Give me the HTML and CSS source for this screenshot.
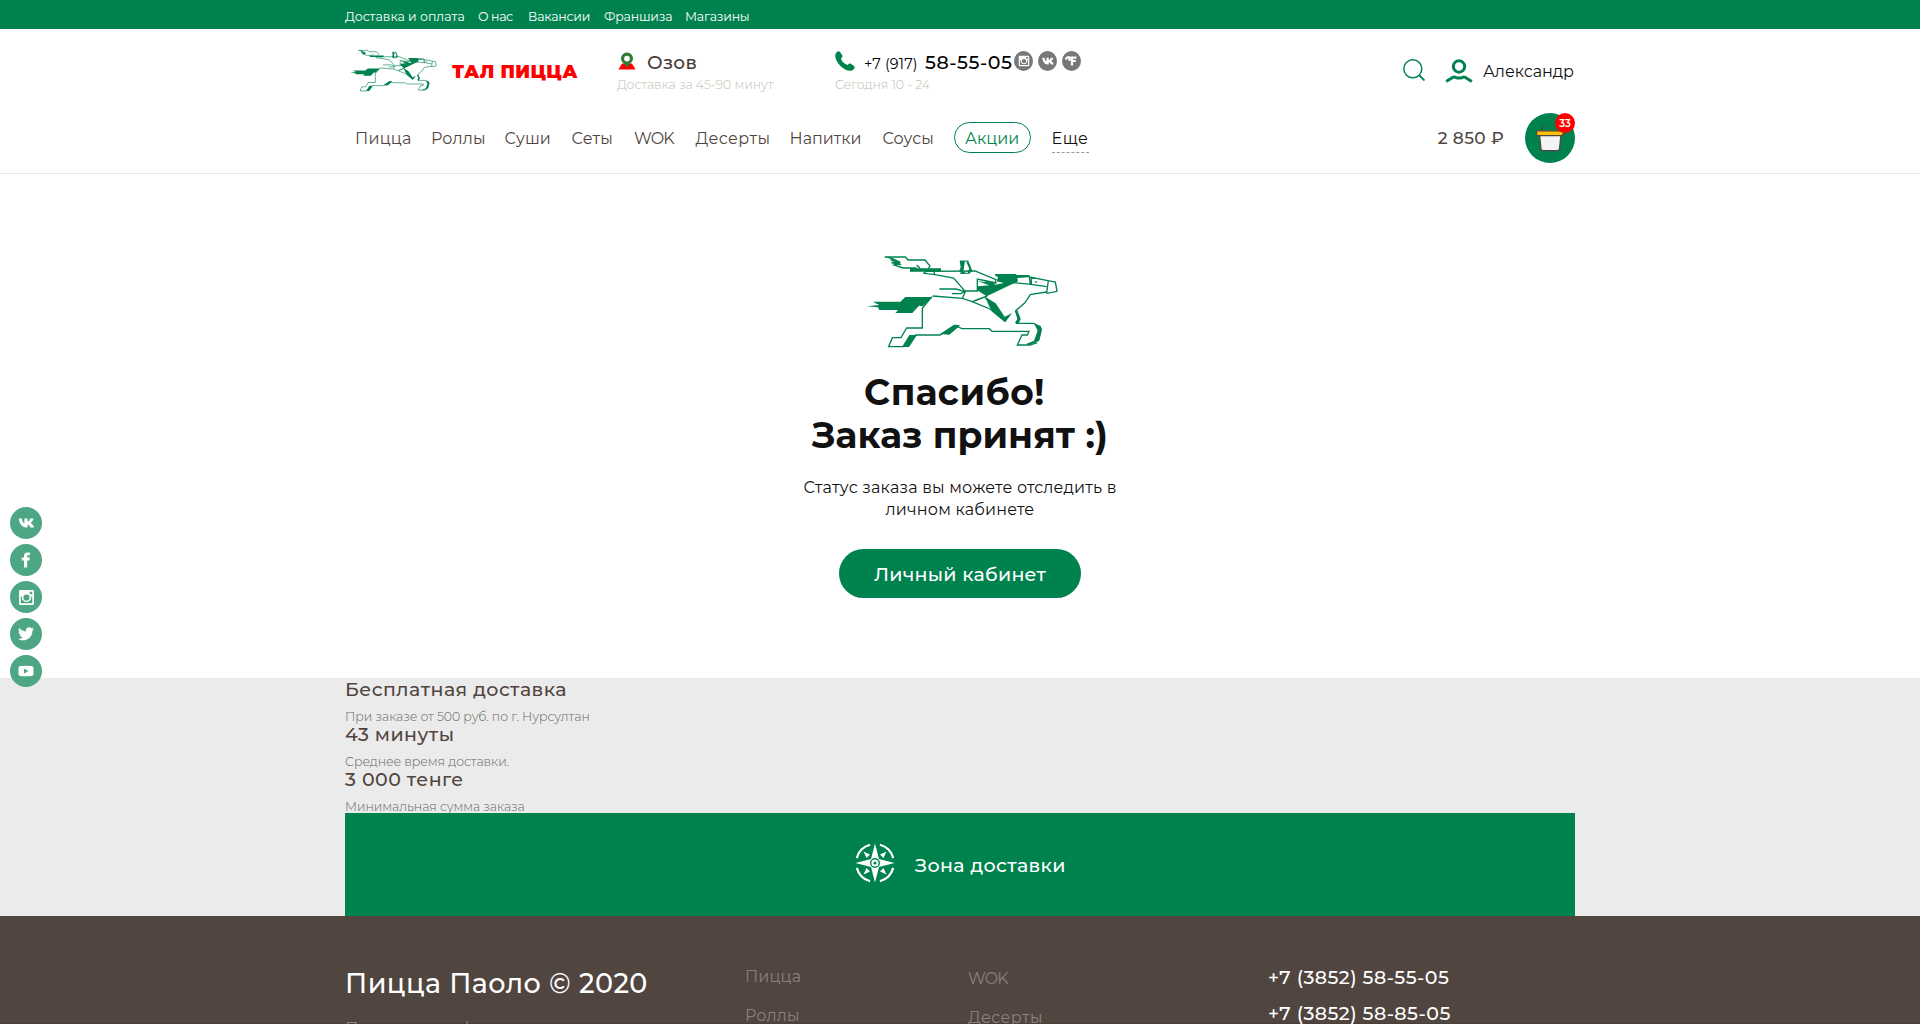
FILE: index.html
```
<!DOCTYPE html>
<html lang="ru">
<head>
<meta charset="utf-8">
<title>Тал Пицца</title>
<link rel="stylesheet" href="styles.css">
</head>
<body>
<svg class="defs" width="0" height="0">
  <symbol id="horse" viewBox="50 40 575 285">
    <g fill="none" stroke="currentColor" stroke-width="4" stroke-linejoin="miter">
      <path d="M104 49H166L174 58H225L240 76L235 84M124 65L150 67L132 73L160 82H200M200 73L210 83M228 92L375 91L438 117L436 127L405 122M228 92L222 98L255 102L311 112L346 153L337 173L366 183L412 166M253 92V102M346 151H382V115L440 127M268 145H318L344 153L332 159H306M412 166L375 181M405 171L430 188L422 200M366 183L420 205L466 243M248 166L337 173M246 168L217 203V262H170L153 291H127L116 318H160L178 295M195 283H270L315 255L336 264H418L426 272H537L532 283H516L502 313H540L562 306M436 105H537V109L605 122L616 124L621 152L592 158L588 154L541 162L524 187L497 210L508 235L500 248H552L574 266M538 109L541 132M480 125L543 131L590 138M595 120L590 157M544 111V132"/>
    </g>
    <g fill="currentColor">
      <path d="M104 48L122 50L154 64L146 67L155 71L150 74L122 68L140 66L119 58L124 56ZM180 83H273V93H180ZM51 197L88 193L68 183H151L166 169H248L218 197L207 195L187 217H136L144 208H88L84 200ZM329 60L345 62L340 92L348 98L336 99L328 91L332 80ZM348 62L356 63L367 90L358 99L352 94L358 84ZM434 100H499V105H535V110L502 112L504 122L492 128L410 167L384 150V137L418 134L384 122L430 126L436 132L462 127L440 122L444 110ZM405 168L437 188L464 228L486 218L466 244L428 213L419 200ZM495 212L502 209L512 234L506 249L495 246L502 235ZM552 248L572 256L576 267L568 300L536 314L530 309L552 300L563 270ZM178 283H201L177 319H156ZM270 280L312 252L330 253L322 262L298 282ZM552 124L562 122L560 127Z"/>
    </g>
    <path d="M331 61H356M330 98H358" fill="none" stroke="currentColor" stroke-width="3"/>
  </symbol>
  <symbol id="vk" viewBox="0 0 16 10"><path fill="currentColor" d="M7.6 9.5C3.5 9.5 1 6 .2.6H3.4C3.7 3.4 4.6 4.9 5.9 5.4V.5H9V3.8C10.300 3.600 11.100 2.300 11.600.6H15C14.600 2.500 13.500 4 12.100 4.900C13.700 5.700 14.900 7.300 15.600 9.500H12C11.400 8 10.400 6.800 9 6.500V9.500Z"/></symbol>
  <symbol id="insta" viewBox="0 0 16 16"><path fill="currentColor" fill-rule="evenodd" d="M2 1H14A1 1 0 0 1 15 2V14A1 1 0 0 1 14 15H2A1 1 0 0 1 1 14V2A1 1 0 0 1 2 1ZM2.600 7V13.400H13.400V7H12.300A4.400 4.400 0 1 1 3.700 7ZM11 2.600V5H13.400V2.600ZM8 5.200A2.900 2.900 0 1 0 8 11A2.900 2.900 0 1 0 8 5.200Z"/></symbol>
</svg>

<div class="topbar">
  <nav class="container topbar__nav">
    <a class="w-delivery">Доставка и оплата</a><a class="w-none">О нас</a><a>Вакансии</a><a>Франшиза</a><a>Магазины</a>
  </nav>
</div>

<header class="header">
  <div class="container header__top">
    <div class="logo">
      <svg class="logo__horse"><use href="#horse"/></svg>
      <span class="logo__name">ТАЛ ПИЦЦА</span>
    </div>
    <div class="info">
      <div class="info__row">
        <svg class="pin" viewBox="0 0 18 18"><path fill="#f00" d="M4 11.500H14L17.500 17.500H.5Z"/><path fill="#2e7d32" fill-rule="evenodd" d="M9 .5A6 6 0 0 1 15 6.500C15 10 11 12 9 15.500C7 12 3 10 3 6.500A6 6 0 0 1 9 .5ZM9 3.700A2.900 2.900 0 1 0 9 9.500A2.900 2.900 0 1 0 9 3.700Z"/></svg>
        <span class="city">Озов</span>
      </div>
      <div class="info__note">Доставка за 45-90 минут</div>
    </div>
    <div class="info">
      <div class="info__row">
        <svg class="phone-icon" viewBox="0 0 20 20"><path fill="#00824f" d="M1.500 1.500C2.700.2 4.100 0 5 1L7.200 4.200C7.900 5.300 7.300 6.300 6 7.300C6.300 10 9.800 13.600 12.700 13.900C13.700 12.700 14.700 12.200 15.800 12.800L19 15C20 15.900 19.700 17.200 18.500 18.500C15.500 21.500 9.500 19 5.200 14.700C.9 10.300-1.300 4.500 1.500 1.500Z"/></svg>
        <span class="tel"><span class="tel__code">+7 (917)</span><span class="tel__num">58-55-05</span></span>
        <span class="soc">
          <i><svg width="12" height="12"><use href="#insta"/></svg></i>
          <i><svg width="12" height="8"><use href="#vk"/></svg></i>
          <i><svg width="13" height="10" viewBox="0 0 13 10"><path fill="none" stroke="#fff" stroke-width="2.200" d="M.5 3.500C2 .5 4 1 4.500 2V5M3 1.600H11.500M7 1V9.500M7 5H10.800"/></svg></i>
        </span>
      </div>
      <div class="info__note">Сегодня 10 - 24</div>
    </div>
    <div class="account">
      <svg class="search" viewBox="0 0 22 22"><circle cx="9.800" cy="9.800" r="9" fill="none" stroke="#00824f" stroke-width="1.500"/><path d="M16 16L21.500 21.500" stroke="#00824f" stroke-width="1.800"/></svg>
      <svg class="user" viewBox="0 0 28 24"><circle cx="14" cy="7.500" r="5.700" fill="none" stroke="#00824f" stroke-width="3"/><path d="M1.200 22.500L8 18.200Q9 17.600 10.500 18.300Q14 19.800 17.500 18.300Q19 17.600 20 18.200L26.800 22.500" fill="none" stroke="#00824f" stroke-width="3"/></svg>
      <span class="account__name">Александр</span>
    </div>
  </div>
  <div class="container header__menu">
    <nav class="menu">
      <a class="s2">Пицца</a><a>Роллы</a><a class="s0">Суши</a><a class="s2">Сеты</a><a class="wok">WOK</a><a class="s4">Десерты</a><a class="s0">Напитки</a><a class="s0">Соусы</a><a class="menu__promo">Акции</a><a class="menu__more">Еще</a>
    </nav>
    <div class="cart">
      <span class="cart__sum">2 850 ₽</span>
      <span class="cart__btn">
        <svg viewBox="0 0 50 50"><path d="M15.500 18L20 12" stroke="#51453f" stroke-width="1.200"/><path d="M14.500 21H36L34.600 35.500Q34.300 37.700 32 37.700H18.500Q16.200 37.700 15.900 35.500Z" fill="#f4f4f4" stroke="#51453f" stroke-width="1.300"/><rect x="11.600" y="17.800" width="26.500" height="4.800" rx="1" fill="#ffc107" stroke="#51453f" stroke-width="1.300"/></svg>
        <b class="badge">33</b>
      </span>
    </div>
  </div>
</header>

<main class="thanks">
  <svg class="thanks__horse"><use href="#horse"/></svg>
  <h1><span class="thanks__first">Спасибо!</span><br>Заказ принят :)</h1>
  <p>Статус заказа вы можете отследить в<br>личном кабинете</p>
  <a class="btn">Личный кабинет</a>
</main>

<section class="benefits">
  <div class="container">
    <div class="benefit"><h3>Бесплатная доставка</h3><p>При заказе от 500 руб. по г. Нурсултан</p></div>
    <div class="benefit"><h3>43 минуты</h3><p>Среднее время доставки.</p></div>
    <div class="benefit"><h3>3 000 тенге</h3><p>Минимальная сумма заказа</p></div>
    <a class="zone">
      <svg viewBox="0 0 40 40"><g fill="none" stroke="#fff" stroke-width="2.200"><path d="M24.900 1.800A18.800 18.800 0 0 1 38.200 15.100M38.200 24.900A18.800 18.800 0 0 1 24.900 38.200M15.100 38.200A18.800 18.800 0 0 1 1.800 24.900M1.800 15.100A18.800 18.800 0 0 1 15.100 1.800"/></g><path fill="#fff" d="M20 .5L24 16L39.500 20L24 24L20 39.500L16 24L.5 20L16 16ZM8.500 8.500L15 11.500L11.500 15ZM31.500 8.500L28.500 15L25 11.500ZM31.500 31.500L25 28.500L28.500 25ZM8.500 31.500L11.500 25L15 28.500Z"/><circle cx="20" cy="20" r="4.300" fill="#fff" stroke="#00824f" stroke-width="1.400"/><circle cx="20" cy="20" r="1.600" fill="#00824f"/></svg>
      <span>Зона доставки</span>
    </a>
  </div>
</section>

<footer class="footer">
  <div class="container footer__grid">
    <div><div class="footer__title">Пицца Паоло © 2020</div><a class="footer__policy">Политика конфиденциальности</a></div>
    <nav class="footer__nav"><a>Пицца</a><a>Роллы</a></nav>
    <nav class="footer__nav footer__nav--second"><a class="wok">WOK</a><a class="s4">Десерты</a></nav>
    <div class="footer__phones"><a>+7 (3852) 58-55-05</a><a>+7 (3852) 58-85-05</a></div>
  </div>
</footer>

<aside class="share">
  <a><svg width="17" height="10"><use href="#vk"/></svg></a>
  <a><svg width="10" height="16" viewBox="0 0 10 16"><path fill="#fff" d="M3 15.500V8.500H.8V5.500H3V4C3 1.500 4.300.5 6.300.5H8.800V3.300H7.300C6.500 3.300 6.200 3.700 6.200 4.400V5.500H8.800L8.400 8.500H6.200V15.500Z"/></svg></a>
  <a><svg width="17" height="17"><use href="#insta"/></svg></a>
  <a><svg width="16" height="14" viewBox="0 0 16 14"><path fill="#fff" d="M16 2L14.400 3.700C14.500 9 10.700 13.300 5 13.300C3.200 13.300 1.500 12.800.2 12C1.900 12.100 3.500 11.600 4.800 10.600C3.400 10.500 2.200 9.600 1.800 8.300H3.200C1.700 7.900.6 6.600.6 5L2 5.400C.6 4.400.2 2.600 1.100 1C2.700 3 5 4.200 7.900 4.400C7.400 2 9 .3 11.100.3C12.100.3 12.900.6 13.500 1.300L15.500.5L14.200 2.300Z"/></svg></a>
  <a><svg width="16" height="12" viewBox="0 0 16 12"><path fill="#fff" fill-rule="evenodd" d="M2.500 1Q8 .4 13.500 1Q15.500 1.200 15.500 3V9Q15.500 10.800 13.500 11Q8 11.600 2.500 11Q.5 10.800 .5 9V3Q.5 1.200 2.500 1ZM6 3.500V8.500L10.500 6Z"/></svg></a>
</aside>
</body>
</html>
```
FILE: styles.css
```
* { box-sizing: border-box; margin: 0; padding: 0; }
body {
  height: 1024px;
  overflow: hidden;
  background: #fff;
  color: #111;
  font-family: Montserrat, Inter, sans-serif;
}
svg { display: block; flex: none; }
.defs { position: absolute; }
.container { width: 1230px; margin: 0 auto; }

.topbar { height: 29px; background: #00824f; color: #fff; }
.topbar__nav {
  display: grid;
  grid-template-columns: 133px 50px 76px 81px auto;
  padding-top: 4px;
  font-size: 12.5px;
  line-height: 25px;
  letter-spacing: -.2px;
}
.w-delivery { letter-spacing: 0; }
.w-none { letter-spacing: -.4px; }

.header { height: 145px; border-bottom: 1px solid #e6e6e6; }
.header__top {
  display: grid;
  grid-template-columns: 272px 218px 1fr auto;
  height: 84px;
}
.logo { display: flex; padding: 20px 0 0 5px; color: #00824f; }
.logo__horse { width: 87px; height: 43px; }
.logo__name {
  margin-left: 15px;
  padding-top: 2px;
  color: #f00;
  font-size: 18px;
  font-weight: 900;
  line-height: 42px;
  letter-spacing: .4px;
}
.info { padding-top: 22px; }
.info__row { display: flex; height: 24px; line-height: 24px; }
.pin { width: 18px; height: 18px; margin: 1px 11px 0 1px; }
.city { color: #453a35; font-size: 18.5px; font-weight: 500; letter-spacing: .3px; }
.info__note {
  color: #c2bdb2;
  font-size: 12.5px;
  font-weight: 300;
  line-height: 20px;
  letter-spacing: -.03px;
}
.phone-icon { width: 20px; height: 20px; }
.tel { display: flex; align-items: baseline; width: 159px; padding-left: 9px; color: #000; white-space: nowrap; }
.tel__code { width: 61px; font-size: 14.5px; letter-spacing: .13px; }
.tel__num { font-size: 19px; font-weight: 500; letter-spacing: .55px; }
.soc { display: flex; gap: 5px; color: #fff; }
.soc i {
  display: flex;
  align-items: center;
  justify-content: center;
  width: 19px;
  height: 20px;
  border-radius: 50%;
  background: #777;
}
.account { display: flex; padding: 30px 1px 0 0; }
.search { width: 22px; height: 22px; margin-right: 20px; }
.user { width: 28px; height: 24px; margin-right: 10px; }
.account__name { font-size: 16px; line-height: 26px; letter-spacing: -.05px; }

.header__menu { display: flex; justify-content: space-between; height: 50px; }
.menu {
  display: grid;
  grid-template-columns: 76px 73.5px 67px 62.5px 61.5px 94px 93px 72px 97px auto;
  align-items: start;
  padding: 9px 0 0 10px;
  color: #51453f;
  font-size: 16px;
  line-height: 33px;
  letter-spacing: .13px;
}
.s0 { letter-spacing: 0; }
.s2 { letter-spacing: .23px; }
.s4 { letter-spacing: .44px; }
.wok { letter-spacing: -.8px; }
.menu__promo {
  width: 77px;
  height: 31px;
  margin-left: -.5px;
  padding-left: 10px;
  border: 1px solid #00824f;
  border-radius: 16px;
  color: #00824f;
  line-height: 31px;
  letter-spacing: 0;
}
.menu__more {
  width: 37px;
  height: 31px;
  border-bottom: 1px dashed #999;
  color: #111;
  letter-spacing: .6px;
}
.cart { display: flex; gap: 21px; }
.cart__sum { color: #51453f; font-size: 17px; font-weight: 500; line-height: 51px; letter-spacing: .35px; }
.cart__btn { position: relative; width: 50px; height: 50px; border-radius: 50%; background: #00824f; }
.badge {
  position: absolute;
  top: 0;
  right: 0;
  width: 20px;
  height: 20px;
  border-radius: 50%;
  background: #f00;
  color: #fff;
  font-size: 10px;
  font-weight: 600;
  line-height: 21px;
  text-align: center;
}

.thanks {
  display: flex;
  flex-direction: column;
  align-items: center;
  height: 504px;
  padding-top: 80px;
  text-align: center;
}
.thanks__horse { width: 193px; height: 95px; margin-left: 4px; color: #00824f; }
.thanks h1 { margin-top: 22px; font-size: 36px; font-weight: 700; line-height: 43px; letter-spacing: .08px; }
.thanks__first { margin-right: 11px; letter-spacing: .4px; }
.thanks p { margin-top: 20px; font-size: 16px; line-height: 22px; letter-spacing: .2px; }
.btn {
  width: 242px;
  height: 49px;
  margin-top: 28px;
  border-radius: 25px;
  background: #00824f;
  color: #fff;
  font-size: 19px;
  font-weight: 500;
  line-height: 51px;
  letter-spacing: .27px;
}

.benefits { height: 238px; background: #ebebeb; }
.benefit { height: 45px; }
.benefit h3 { color: #51453f; font-size: 19px; font-weight: 500; line-height: 24px; letter-spacing: .46px; }
.benefit p { padding-top: 6px; color: #666; font-size: 12.5px; font-weight: 300; line-height: 18px; letter-spacing: -.05px; }
.zone {
  display: flex;
  align-items: center;
  height: 103px;
  padding-left: 510px;
  background: #00824f;
  color: #fff;
  font-size: 19px;
  font-weight: 500;
  letter-spacing: .4px;
}
.zone svg { width: 40px; height: 40px; margin: 0 20px 4px 0; }
.zone span { padding-top: 2px; }

.footer { height: 108px; overflow: hidden; background: #51453f; box-shadow: inset 0 -1px #4b3f39; }
.footer__grid { display: grid; grid-template-columns: 400px 223px 300px auto; }
.footer__title {
  padding-top: 50px;
  color: #fff;
  font-size: 27px;
  font-weight: 500;
  line-height: 36px;
  letter-spacing: .47px;
}
.footer__policy {
  display: block;
  margin-top: 15px;
  color: #8a817b;
  font-size: 16px;
  line-height: 24px;
}
.footer__nav { display: flex; flex-direction: column; padding-top: 41px; color: #8a817b; font-size: 16px; line-height: 39px; letter-spacing: .15px; }
.footer__nav--second { padding-top: 43px; }
.footer__phones { display: flex; flex-direction: column; padding-top: 44px; color: #fff; font-size: 19px; font-weight: 500; line-height: 36px; letter-spacing: .45px; }

.share { position: fixed; left: 10px; top: 507px; display: grid; gap: 5px; color: #fff; }
.share a {
  display: flex;
  align-items: center;
  justify-content: center;
  width: 32px;
  height: 32px;
  border-radius: 50%;
  background: #4da784;
}
```
